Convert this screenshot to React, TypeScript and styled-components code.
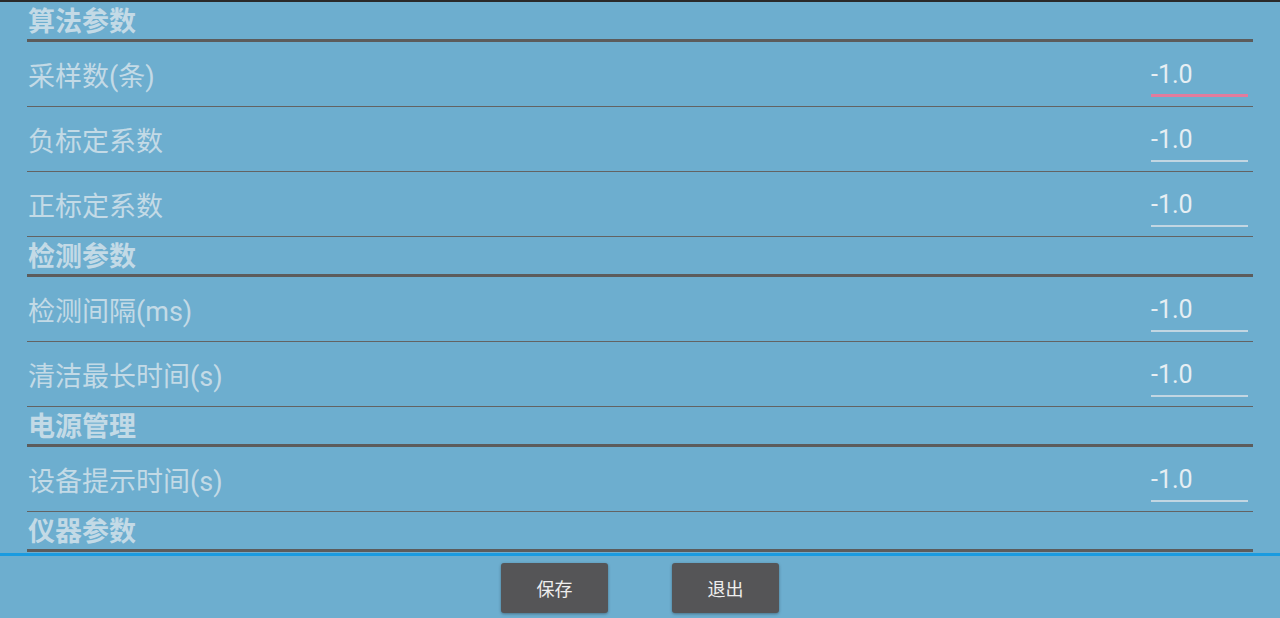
import styled, { createGlobalStyle } from 'styled-components';

const GlobalStyle = createGlobalStyle`
	html, body {
		margin: 0;
		padding: 0;
		background: #6daecf;
		font-family: Roboto, "Noto Sans CJK SC", sans-serif;
	}
`;

interface Field {
	label: string;
	value: string;
	focused?: boolean;
}

interface Section {
	title: string;
	fields: Field[];
}

const sections: Section[] = [
	{
		title: '算法参数',
		fields: [
			{ label: '采样数(条)', value: '-1.0', focused: true },
			{ label: '负标定系数', value: '-1.0' },
			{ label: '正标定系数', value: '-1.0' },
		],
	},
	{
		title: '检测参数',
		fields: [
			{ label: '检测间隔(ms)', value: '-1.0' },
			{ label: '清洁最长时间(s)', value: '-1.0' },
		],
	},
	{
		title: '电源管理',
		fields: [{ label: '设备提示时间(s)', value: '-1.0' }],
	},
	{
		title: '仪器参数',
		fields: [],
	},
];

const App = () => {
	return (
		<Screen>
			<GlobalStyle />
			<StatusEdge />
			<List>
				{sections.map((section) => (
					<div key={section.title}>
						<Header>{section.title}</Header>
						{section.fields.map((field) => (
							<Row key={field.label}>
								<Label>{field.label}</Label>
								<Input focused={field.focused}>{field.value}</Input>
							</Row>
						))}
					</div>
				))}
			</List>
			<Footer>
				<Button>保存</Button>
				<Button>退出</Button>
			</Footer>
		</Screen>
	);
};

const Screen = styled.div`
	width: 1280px;
	height: 618px;
	display: flex;
	flex-direction: column;
	background: #6daecf;
	overflow: hidden;
`;

const StatusEdge = styled.div`
	height: 2px;
	background: #2a2a2a;
`;

const List = styled.div`
	height: 554px;
	padding: 0 27px;
	box-sizing: border-box;
	border-bottom: 3px solid #1a9be0;
	overflow: hidden;
`;

const Header = styled.div`
	height: 37px;
	border-bottom: 3px solid #5c5c5c;
	padding-left: 1px;
	font-family: "Noto Sans CJK SC", sans-serif;
	font-weight: 700;
	font-size: 27px;
	line-height: 36px;
	color: #c3dae6;
`;

const Row = styled.div`
	height: 64px;
	border-bottom: 1px solid #636363;
	display: flex;
	align-items: center;
	justify-content: space-between;
	padding-left: 1px;
	padding-right: 5px;
`;

const Label = styled.span`
	font-family: Roboto, "Noto Sans CJK SC", sans-serif;
	font-size: 27px;
	color: #c3dae6;
	margin-top: 1px;
`;

const Input = styled.div<{ focused?: boolean }>`
	width: 97px;
	height: 46px;
	box-sizing: border-box;
	padding-top: 4px;
	font-family: Roboto, sans-serif;
	font-size: 25px;
	line-height: 39px;
	color: #e6eef3;
	border-bottom: ${(p) => (p.focused ? '3px solid #e27b9d' : '2px solid #c2d6e2')};
`;

const Footer = styled.div`
	flex: 1;
	display: flex;
	justify-content: center;
	align-items: flex-start;
	gap: 64px;
	padding-top: 7px;
`;

const Button = styled.button`
	width: 107px;
	height: 50px;
	border: none;
	border-radius: 3px;
	background: #555557;
	color: #eeeeee;
	font-family: "Noto Sans CJK SC", sans-serif;
	font-size: 18px;
	box-shadow: 0 1px 3px rgba(0, 0, 0, 0.35);
`;

export default App;
